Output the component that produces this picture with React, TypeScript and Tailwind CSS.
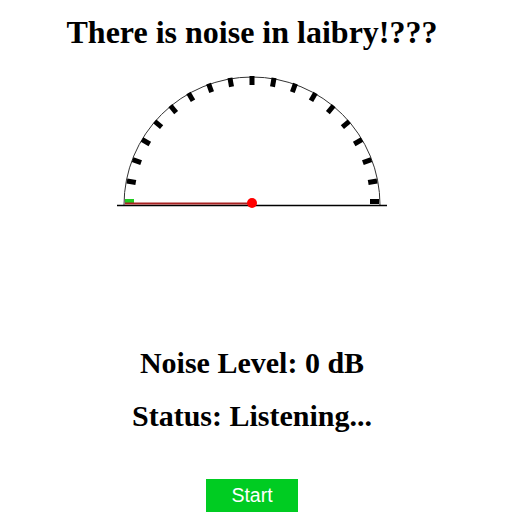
import React from "react";

const ticks = Array.from({ length: 19 }, (_, i) => i * 10);

const Gauge = ({ level }: { level: number }) => {
  const cx = 145;
  const cy = 143;
  const r = 128;
  const angle = Math.PI - (level / 100) * Math.PI;
  const nx = cx + 127 * Math.cos(angle);
  const ny = cy - 127 * Math.sin(angle);

  return (
    <svg width="290" height="155" viewBox="0 0 290 155">
      <path
        d={`M ${cx - r} ${cy + 2} A ${r} ${r} 0 0 1 ${cx + r} ${cy + 2}`}
        fill="none"
        stroke="#333"
        strokeWidth="1"
      />
      <line x1="10" y1="145.5" x2="280" y2="145.5" stroke="#000" strokeWidth="1.5" />
      {ticks.map((deg) => {
        const a = Math.PI - (deg * Math.PI) / 180;
        const active = deg <= level * 1.8;
        const dy = deg === 0 || deg === 180 ? -1.5 : 0;
        return (
          <line
            key={deg}
            x1={cx + 118 * Math.cos(a)}
            y1={cy - 118 * Math.sin(a) + dy}
            x2={cx + 127 * Math.cos(a)}
            y2={cy - 127 * Math.sin(a) + dy}
            stroke={active ? "#22cc22" : "#000"}
            strokeWidth="5"
          />
        );
      })}
      <line x1={cx} y1={cy + 0.5} x2={nx} y2={ny + 0.5} stroke="#a82222" strokeWidth="2" />
      <circle cx={cx} cy={cy} r="5" fill="#ff0000" />
    </svg>
  );
};

export default function App() {
  return (
    <div className="w-[504px] min-h-[526px] bg-white flex flex-col items-center font-['Liberation_Serif',serif] text-black">
      {/* Title */}
      <h1 className="pt-[14px] text-[32px] leading-[37px] font-bold">
        There is noise in laibry!???
      </h1>

      {/* Gauge */}
      <div className="mt-[9px]">
        <Gauge level={0} />
      </div>

      {/* Readings */}
      <h2 className="mt-[131px] text-[30px] leading-[34px] font-bold">
        Noise Level: 0 dB
      </h2>
      <h2 className="mt-[19px] text-[30px] leading-[34px] font-bold">
        Status: Listening...
      </h2>

      <button className="mt-[46px] w-[92px] h-[33px] bg-[#00cc22] text-white text-[19.5px] font-['Liberation_Sans',sans-serif]">
        Start
      </button>
    </div>
  );
}
